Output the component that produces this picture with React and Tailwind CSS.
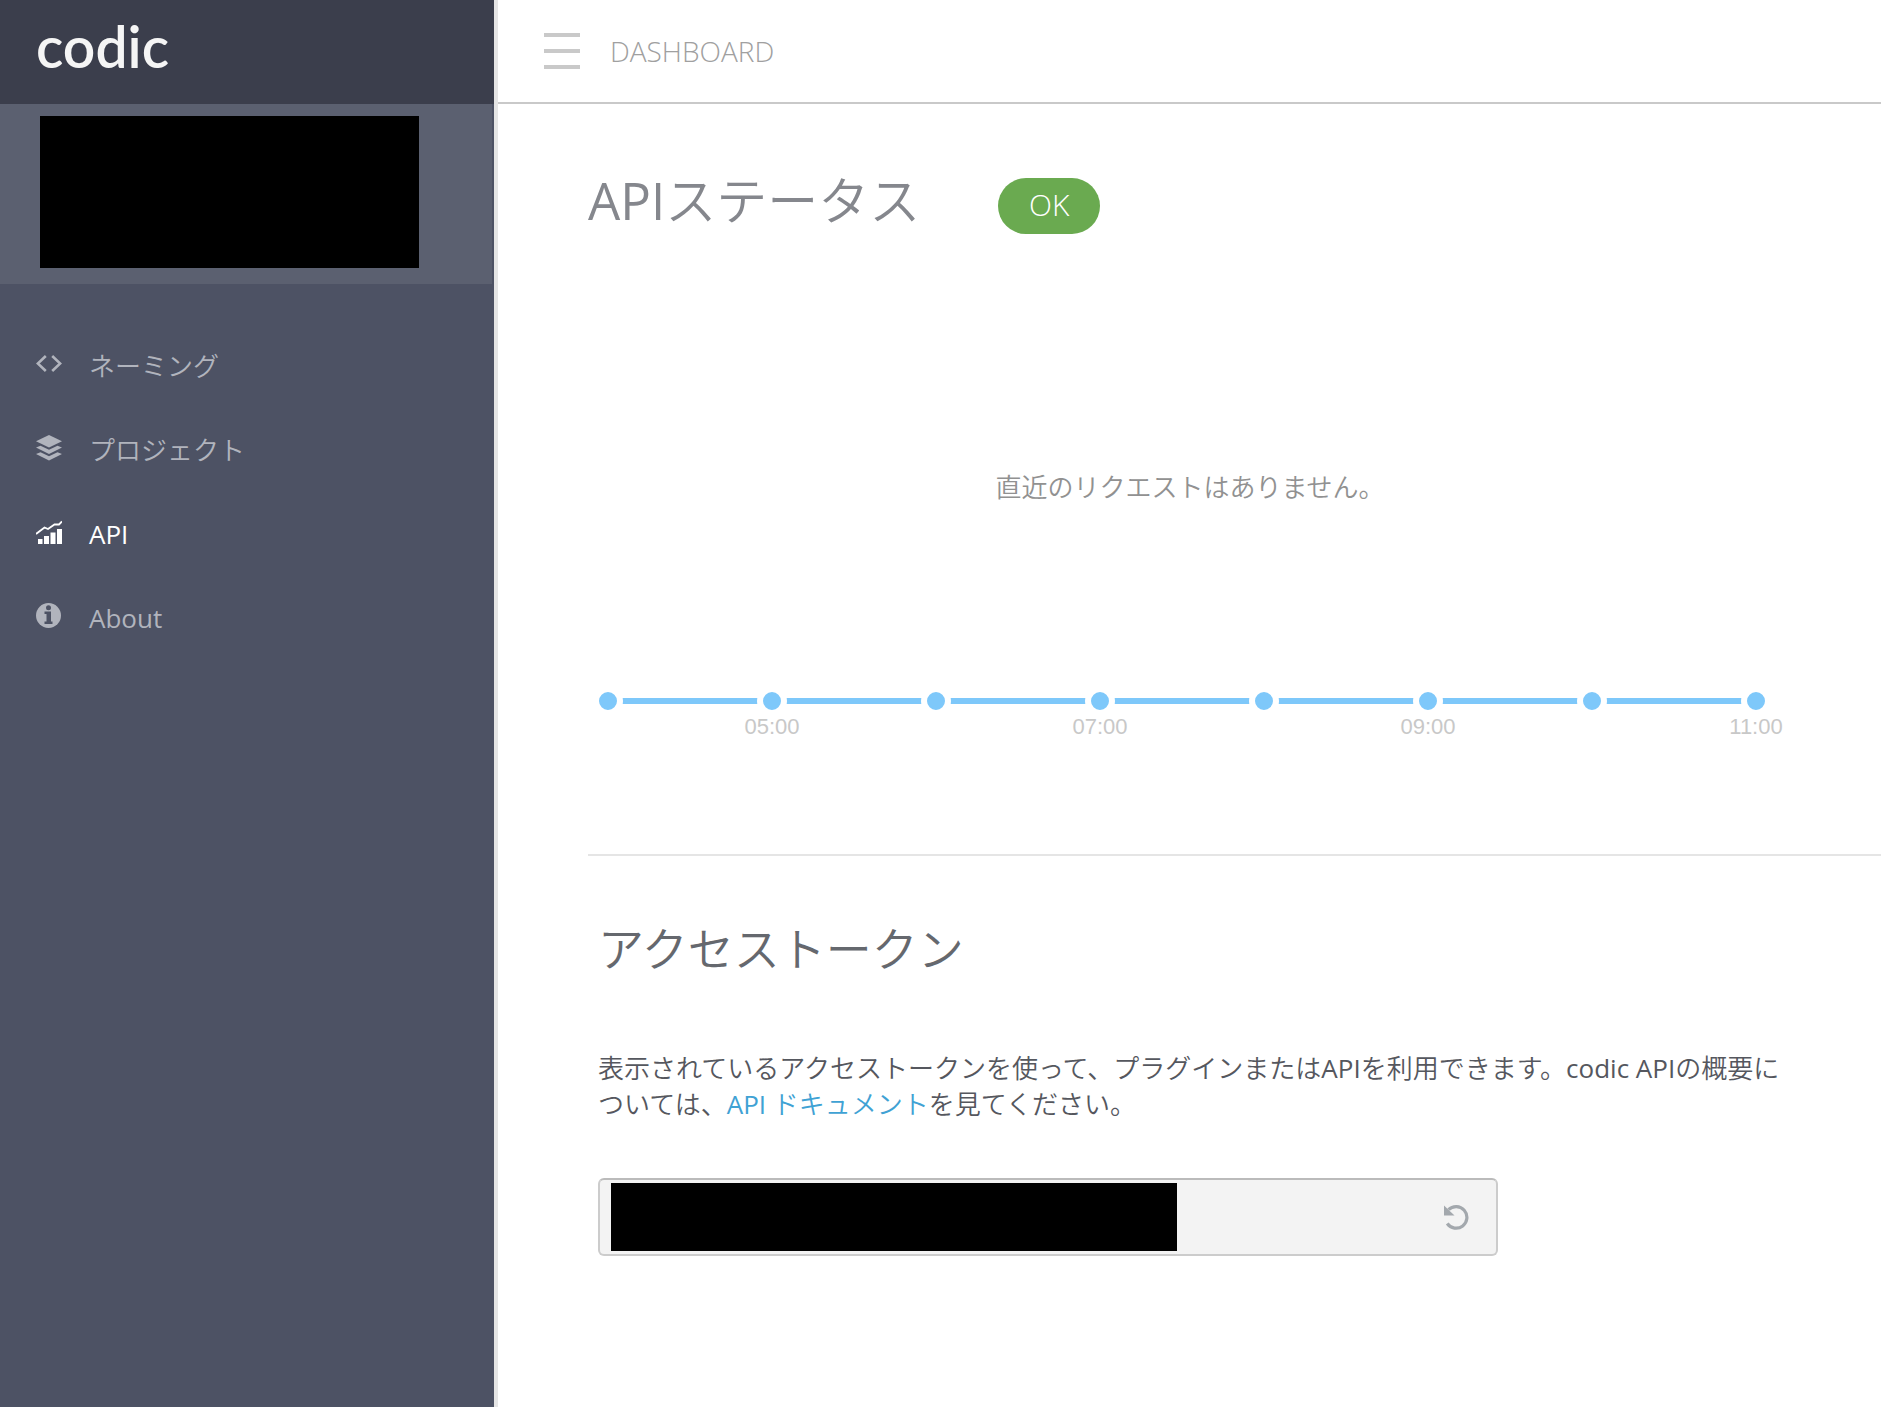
import { useState } from "react";

const NAV = [
  { label: "ネーミング", icon: CodeIcon },
  { label: "プロジェクト", icon: LayersIcon },
  { label: "API", icon: ChartIcon },
  { label: "About", icon: InfoIcon },
];

const HOURS = ["", "05:00", "", "07:00", "", "09:00", "", "11:00"];

function CodeIcon() {
  return (
    <svg width="26" height="26" viewBox="0 0 26 26" fill="none" stroke="currentColor" strokeWidth="2.6">
      <path d="M9.8 5 1.8 12.500l8 7.500M16.200 5l8 7.500-8 7.500" />
    </svg>
  );
}

function LayersIcon() {
  return (
    <svg width="26" height="26" viewBox="0 0 26 26" fill="currentColor">
      <path d="M13 0 26 6.300 13 12.500 0 6.300z" />
      <path d="M0 12.600 4.500 10.800 13 14.800l8.500-4 4.500 1.800-13 6.400z" />
      <path d="M0 19 4.500 17.200 13 21.200l8.500-4L26 19l-13 6.500z" />
    </svg>
  );
}

function ChartIcon() {
  return (
    <svg width="26" height="26" viewBox="0 0 26 26" fill="currentColor">
      <path d="M2 20h4.500v5H2zM8 17h5v8H8zM14.500 13.500h5V25h-5zM21 10h5v15h-5z" />
      <path d="M0 15 8.500 8.500 12 10l6.500-4.500h4.500L26 2.500" fill="none" stroke="currentColor" strokeWidth="1.800" />
    </svg>
  );
}

function InfoIcon() {
  return (
    <svg width="26" height="26" viewBox="0 0 26 26">
      <circle cx="12.500" cy="12.500" r="12.500" fill="currentColor" />
      <g fill="#4d5264">
        <circle cx="12.500" cy="4.700" r="2.500" />
        <path d="M8.500 8.500h6.500v10h1.500v2.500H8.500v-2.500h2v-7.500h-2z" />
      </g>
    </svg>
  );
}

function UndoIcon() {
  return (
    <svg width="26" height="26" viewBox="0 0 26 26">
      <path d="M0 1.500v10h10.500z" fill="currentColor" />
      <path d="M4.500 5.700A10.800 10.800 0 1 1 3.200 19.500" fill="none" stroke="currentColor" strokeWidth="3.200" />
    </svg>
  );
}

function Sidebar({ active, onSelect }) {
  return (
    <aside className="w-[498px] shrink-0 border-r-4 border-[#e5e5e5] bg-[#4d5264]">
      <div className="flex h-[104px] items-center bg-[#3b3e4c] px-9">
        <a href="#" className="pb-3 font-['Lato'] text-[57px] leading-[56px] font-semibold text-[#f5f5f5]">
          codic
        </a>
      </div>
      <div className="mr-0.5 h-[180px] bg-[#5b6070] px-10 py-3">
        <div className="h-[152px] w-[379px] bg-black" />
      </div>
      <nav className="pt-10">
        <ul>
          {NAV.map(({ label, icon: Icon }) => (
            <li key={label}>
              <a
                href="#"
                onClick={() => onSelect(label)}
                className={
                  "flex h-[84px] items-center gap-[27px] px-9 text-[26px] " +
                  (active === label ? "text-white" : "text-[#b1b4bd]")
                }
              >
                <span className="pb-1">
                  <Icon />
                </span>
                {label}
              </a>
            </li>
          ))}
        </ul>
      </nav>
    </aside>
  );
}

function RequestChart() {
  return (
    <svg className="h-[48px] w-full overflow-visible" role="img" aria-label="requests per hour">
      <line x1="0" y1="9" x2="100%" y2="9" stroke="#7ec8fa" strokeWidth="6" />
      {HOURS.map((hour, i) => {
        const x = (i * 100) / (HOURS.length - 1) + "%";
        return (
          <g key={i}>
            <circle cx={x} cy="9" r="12" fill="#7ec8fa" stroke="#fff" strokeWidth="6" />
            <text x={x} y="42" textAnchor="middle" className="fill-[#c8c8c8] font-['Liberation_Sans'] text-[22px]">
              {hour}
            </text>
          </g>
        );
      })}
    </svg>
  );
}

export default function App() {
  const [active, setActive] = useState("API");

  return (
    <div
      lang="ja"
      className="flex min-h-screen bg-white font-['Open_Sans','Noto_Sans_CJK_JP_DemiLight','Noto_Sans_CJK_JP',sans-serif] text-[#55575e]"
    >
      <Sidebar active={active} onSelect={setActive} />

      <div className="min-w-0 flex-1">
        <header className="flex h-[104px] items-center border-b-2 border-[#c9c9c9] pl-[46px]">
          <button aria-label="menu" className="flex flex-col gap-3">
            <span className="h-1 w-9 bg-[#c9c9c9]" />
            <span className="h-1 w-9 bg-[#c9c9c9]" />
            <span className="h-1 w-9 bg-[#c9c9c9]" />
          </button>
          <span className="pl-[30px] text-[28px] font-light text-[#a0a0a0]">DASHBOARD</span>
        </header>

        <main className="pl-[90px]">
          <section className="border-b-2 border-[#e5e5e5] pt-16">
            <div className="flex h-[76px] items-center gap-[78px]">
              <h1 className="pb-3 text-[51px] leading-[68px] text-[#85878d]">APIステータス</h1>
              <span className="flex h-14 w-[102px] items-center justify-center rounded-full bg-[#6aaa50] pb-1 text-[30px] font-light text-white">
                OK
              </span>
            </div>
            <div className="pr-[125px] pb-[114px] pl-5">
              <p className="flex h-[448px] items-center justify-center pt-[38px] pl-4 text-[26px] text-[#919191]">
                直近のリクエストはありません。
              </p>
              <RequestChart />
            </div>
          </section>

          <section className="pt-14 pr-[90px] pl-[10px]">
            <h2 className="text-[46px] leading-[72px] text-[#65686e]">アクセストークン</h2>
            <p className="pt-[66px] text-[26px] leading-9">
              表示されているアクセストークンを使って、プラグインまたはAPIを利用できます。codic APIの概要については、
              <a href="#" className="text-[#3fa2d4]">
                API ドキュメント
              </a>
              を見てください。
            </p>
            <div className="mt-14 flex h-[78px] max-w-[900px] items-center justify-between rounded-md border-2 border-[#cccccc] border-t-[#bbbbbb] bg-[#f3f3f3] pr-[26px] pl-[11px]">
              <input
                type="text"
                readOnly
                aria-label="アクセストークン"
                className="h-[68px] w-[566px] bg-black text-[26px] text-black"
              />
              <button aria-label="再発行" className="text-[#a3a8ad]">
                <UndoIcon />
              </button>
            </div>
          </section>
        </main>
      </div>
    </div>
  );
}
